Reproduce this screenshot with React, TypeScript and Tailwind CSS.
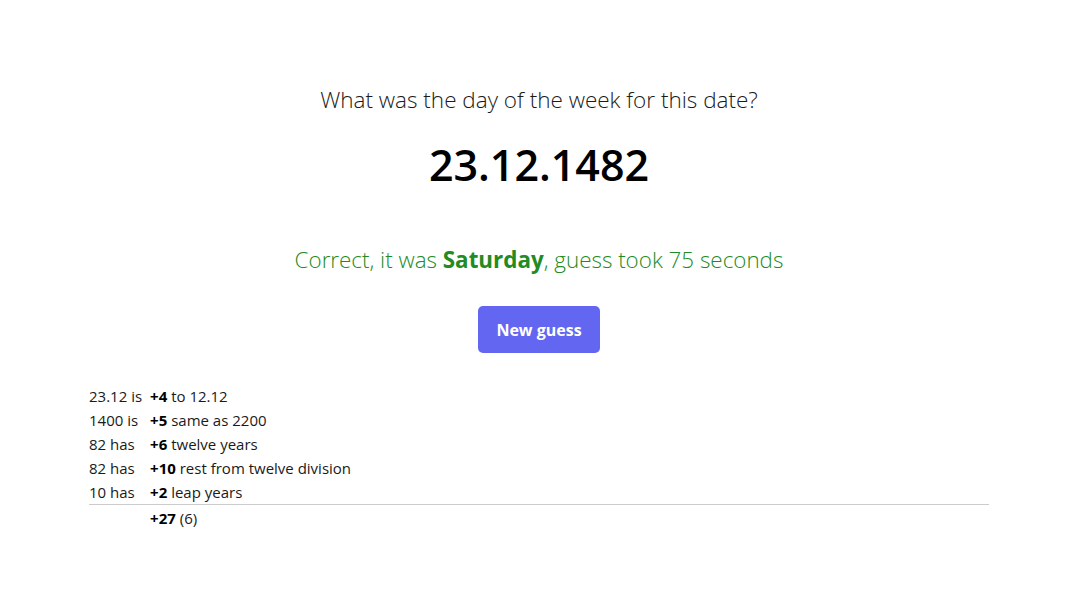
const steps = [
  { label: '23.12 is', value: '+4', note: 'to 12.12' },
  { label: '1400 is', value: '+5', note: 'same as 2200' },
  { label: '82 has', value: '+6', note: 'twelve years' },
  { label: '82 has', value: '+10', note: 'rest from twelve division' },
  { label: '10 has', value: '+2', note: 'leap years' },
];

export default function App() {
  return (
    <div className="min-h-screen bg-white font-['Open_Sans',sans-serif] text-black">
      <div className="mx-auto w-[900px] pt-[84px]">
        <p className="text-center text-[22.5px] font-light leading-[32px] text-[#1a1a1a]">What was the day of the week for this date?</p>
        <p className="mt-[17px] text-center text-[43px] font-semibold leading-[64px]">23.12.1482</p>

        <p className="mt-[47px] text-center text-[22.4px] font-light leading-[32px] text-[#228b22]">
          Correct, it was <span className="font-bold">Saturday</span>, guess took 75 seconds
        </p>

        <div className="mt-[30px] flex justify-center">
          <button type="button" className="h-[47px] w-[122px] rounded-[5px] bg-[#6366f1] text-[16px] font-bold text-white">
            New guess
          </button>
        </div>

        <table className="mt-[31px] w-full border-collapse text-[15px] leading-[24px] text-[#1a1a1a]">
          <tbody>
            {steps.map((s, i) => (
              <tr key={i}>
                <td className="w-[61px] whitespace-nowrap pr-2">{s.label}</td>
                <td>
                  <span className="font-bold text-black">{s.value}</span> {s.note}
                </td>
              </tr>
            ))}
            <tr className="border-t border-[#cccccc]">
              <td />
              <td className="pt-px">
                <span className="font-bold text-black">+27</span> (6)
              </td>
            </tr>
          </tbody>
        </table>
      </div>
    </div>
  );
}
